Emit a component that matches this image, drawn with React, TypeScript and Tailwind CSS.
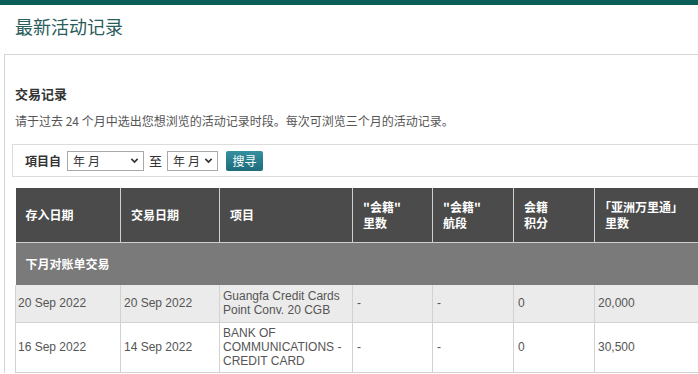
const rows = [
  {
    posted: '20 Sep 2022',
    date: '20 Sep 2022',
    item: 'Guangfa Credit Cards Point Conv. 20 CGB',
    miles: '-',
    sectors: '-',
    points: '0',
    asiaMiles: '20,000',
  },
  {
    posted: '16 Sep 2022',
    date: '14 Sep 2022',
    item: 'BANK OF COMMUNICATIONS - CREDIT CARD',
    miles: '-',
    sectors: '-',
    points: '0',
    asiaMiles: '30,500',
  },
];

function FakeSelect({ width, chevronGap }: { width: string; chevronGap: string }) {
  return (
    <div
      className={`flex h-[20px] items-center border border-[#a9a9a9] bg-white pl-[5px] pr-[4px] text-[12px] text-[#333] ${width}`}>
      <span className="tracking-[3px]">年月</span>
      <svg className={`${chevronGap} h-[9px] w-[9px]`} viewBox="0 0 10 10" fill="none">
        <path d="M1.5 3.2 5 6.8l3.5-3.6" stroke="#333" strokeWidth="1.8" />
      </svg>
    </div>
  );
}

export default function App() {
  const cjk = "font-['Noto_Sans_CJK_SC','Liberation_Sans',sans-serif]";
  return (
    <div className={`h-[374px] w-[698px] overflow-hidden bg-white ${cjk}`}>
      {/* top bar */}
      <div className="h-[5px] bg-[#0b5f58]" />
      <h1 className="ml-[15px] mt-[9px] text-[18px] leading-[24px] text-[#2a5c5c]">最新活动记录</h1>

      <div className="ml-[4px] mt-[16px] border-l border-t border-[#d6d6d6] pt-[29px]">
        <h2 className="ml-[10px] text-[13px] font-bold leading-[20px] text-[#333]">交易记录</h2>
        <p className="ml-[10px] mt-[8px] text-[12px] leading-[18px] text-[#555]">
          请于过去 24 个月中选出您想浏览的活动记录时段。每次可浏览三个月的活动记录。
        </p>

        {/* filter */}
        <div className="ml-[7px] mt-[14px] flex h-[33px] items-center border border-r-0 border-[#dcdcdc] pl-[12px]">
          <span className="text-[12px] font-bold text-[#333]">項目自</span>
          <div className="ml-[6px]">
            <FakeSelect width="w-[77px]" chevronGap="ml-auto" />
          </div>
          <span className="mx-[5px] text-[13px] text-[#333]">至</span>
          <FakeSelect width="w-[51px]" chevronGap="ml-[1px]" />
          <button className="ml-[8px] h-[20px] w-[37px] rounded-[2px] bg-gradient-to-b from-[#3590a0] to-[#1d6c7c] text-[12px] text-white">
            搜寻
          </button>
        </div>

        {/* table */}
        <table className="ml-[10px] mt-[11px] w-[760px] table-fixed border-collapse">
          <colgroup>
            <col className="w-[105px]" />
            <col className="w-[99px]" />
            <col className="w-[133px]" />
            <col className="w-[80px]" />
            <col className="w-[81px]" />
            <col className="w-[81px]" />
            <col className="w-[181px]" />
          </colgroup>
          <thead>
            <tr className="h-[54px] bg-[#4b4b4b] text-left text-[12px] font-bold leading-[16px] text-white">
              <th className="border-r border-b border-[#cfcfcf] pl-[10px] align-middle">存入日期</th>
              <th className="border-r border-b border-[#cfcfcf] pl-[10px] align-middle">交易日期</th>
              <th className="border-r border-b border-[#cfcfcf] pl-[10px] align-middle">项目</th>
              <th className="border-r border-b border-[#cfcfcf] pl-[10px] align-middle">
                "会籍"
                <br />
                里数
              </th>
              <th className="border-r border-b border-[#cfcfcf] pl-[10px] align-middle">
                "会籍"
                <br />
                航段
              </th>
              <th className="border-r border-b border-[#cfcfcf] pl-[10px] align-middle">
                会籍
                <br />
                积分
              </th>
              <th className="border-b border-[#cfcfcf] pl-[4px] align-middle">
                「亚洲万里通」
                <br />
                <span className="pl-[6px]">里数</span>
              </th>
            </tr>
          </thead>
          <tbody>
            <tr className="h-[43px] bg-[#7a7a7a]">
              <td colSpan={7} className="pl-[10px] text-[12px] font-bold text-white">
                下月对账单交易
              </td>
            </tr>
            {rows.map((r, i) => (
              <tr
                key={r.posted + r.date}
                className={`font-['Liberation_Sans',Arial,sans-serif] text-[12px] leading-[14px] text-[#555] ${
                  i === 0 ? 'h-[37px] bg-[#ebebeb]' : 'h-[50px] bg-white'
                }`}>
                <td className="border border-t-0 border-[#d2d2d2] pl-[2px]">{r.posted}</td>
                <td className="border border-t-0 border-[#d2d2d2] pl-[3px]">{r.date}</td>
                <td className="border border-t-0 border-[#d2d2d2] px-[3px]">{r.item}</td>
                <td className="border border-t-0 border-[#d2d2d2] pl-[4px]">{r.miles}</td>
                <td className="border border-t-0 border-[#d2d2d2] pl-[4px]">{r.sectors}</td>
                <td className="border border-t-0 border-[#d2d2d2] pl-[4px]">{r.points}</td>
                <td className="border border-t-0 border-r-0 border-[#d2d2d2] pl-[3px]">{r.asiaMiles}</td>
              </tr>
            ))}
          </tbody>
        </table>
      </div>
    </div>
  );
}
